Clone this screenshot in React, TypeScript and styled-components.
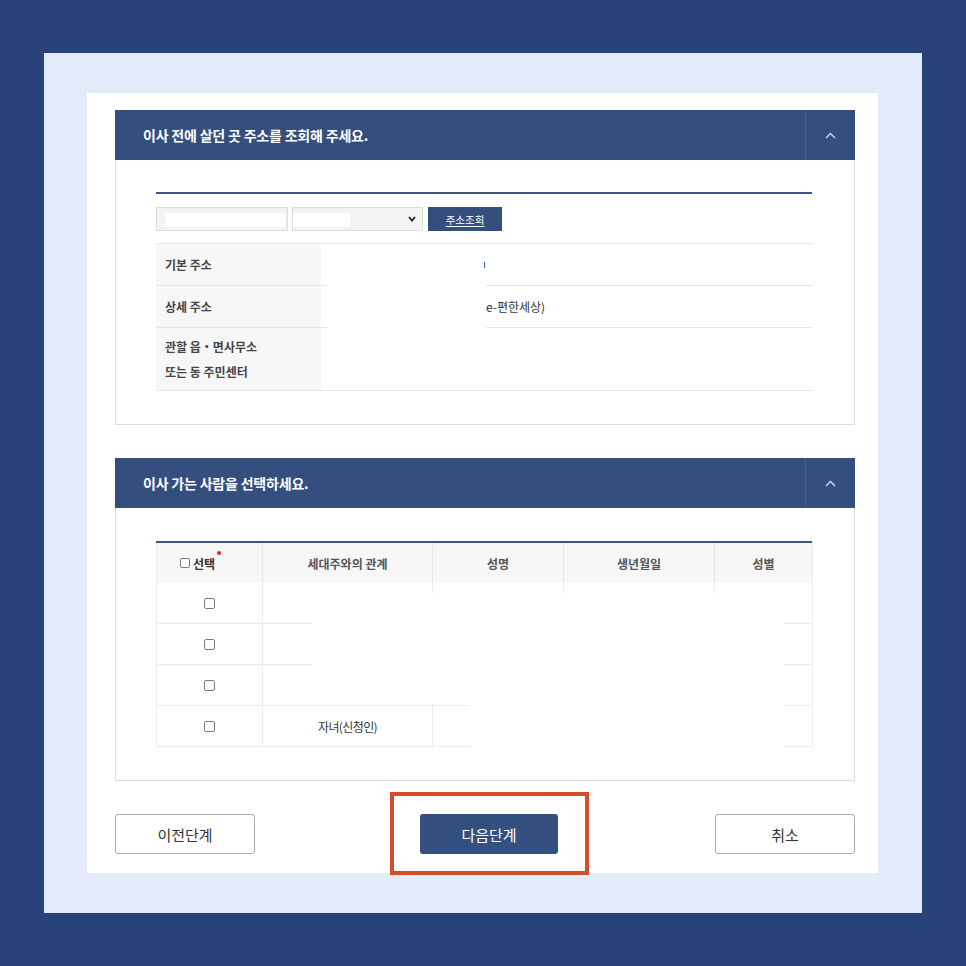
import React from 'react';
import styled, { createGlobalStyle } from 'styled-components';

const GlobalStyle = createGlobalStyle`
  html, body {
    margin: 0;
    padding: 0;
    background: #27437a;
  }
  body {
    font-family: 'Noto Sans CJK KR', 'Noto Sans', sans-serif;
  }
  * {
    box-sizing: border-box;
  }
`;

const Page = styled.div`
  width: 966px;
  height: 966px;
  padding: 53px 44px;
  background: #27437a;
`;

const Frame = styled.div`
  height: 100%;
  background: #e3eaf9;
  padding: 40px 44px 40px 43px;
`;

const Card = styled.div`
  height: 100%;
  background: #fff;
  padding: 17px 23px 19px 28px;
  display: flex;
  flex-direction: column;
`;

const Panel = styled.section`
  & + & {
    margin-top: 33px;
  }
`;

const PanelHeader = styled.div`
  height: 50px;
  background: #344f7e;
  display: flex;
  align-items: center;
  color: #fff;
`;

const PanelTitle = styled.h2`
  flex: 1;
  margin: 0;
  padding-left: 28px;
  font-size: 14px;
  font-weight: 700;
  letter-spacing: -0.2px;
`;

const ToggleButton = styled.button`
  width: 50px;
  height: 100%;
  padding: 0;
  border: 0;
  border-left: 1px solid rgba(255, 255, 255, 0.1);
  background: transparent;
  display: flex;
  align-items: center;
  justify-content: center;
`;

const PanelBody = styled.div<{ $top: number }>`
  border: 1px solid #dcdcdc;
  border-top: 0;
  padding: ${({ $top }) => $top}px 42px 33px 40px;
`;

const FormTop = styled.div`
  border-top: 2px solid #3d5585;
`;

const SearchRow = styled.div`
  display: flex;
  align-items: stretch;
  height: 24px;
  margin-top: 13px;
`;

const TextField = styled.div`
  width: 132px;
  border: 1px solid #dcdcdc;
  background: #f3f3f3;
  padding: 5px 0 0 8px;
`;

const SelectBox = styled.div`
  width: 131px;
  margin-left: 4px;
  border: 1px solid #dcdcdc;
  background: #f3f3f3;
  padding: 5px 6px 0 0;
  display: flex;
  justify-content: space-between;
  align-items: flex-start;
`;

const Blank = styled.span<{ $w: number }>`
  display: block;
  width: ${({ $w }) => $w}px;
  height: 14px;
  background: #fff;
`;

const SelectArrow = styled.svg`
  margin-top: 3px;
`;

const SearchButton = styled.button`
  width: 74px;
  margin-left: 5px;
  border: 0;
  padding: 0;
  background: #344f7e;
  color: #fff;
  font-family: inherit;
  font-size: 10.5px;
  text-decoration: underline;
  text-underline-offset: 2px;
`;

const InfoTable = styled.div`
  position: relative;
  margin-top: 12px;
  border-top: 1px solid #e6e6e6;
`;

const InfoRow = styled.div<{ $h: number }>`
  display: grid;
  grid-template-columns: 165px 1fr;
  height: ${({ $h }) => $h}px;
  border-bottom: 1px solid #e6e6e6;
`;

const InfoLabel = styled.div`
  background: #f7f7f7;
  padding: 0 9px;
  display: flex;
  align-items: center;
  font-size: 12px;
  font-weight: 700;
  line-height: 25px;
  color: #444;
`;

const InfoValue = styled.div<{ $indent?: number }>`
  display: flex;
  align-items: center;
  padding-left: ${({ $indent }) => $indent ?? 10}px;
  font-size: 12px;
  color: #333;
`;

const Caret = styled.span`
  position: relative;
  z-index: 1;
  width: 1px;
  height: 6px;
  background: #2f6ad0;
`;

const Mask = styled.div<{ $x: number; $y: number; $w: number; $h: number }>`
  position: absolute;
  left: ${({ $x }) => $x}px;
  top: ${({ $y }) => $y}px;
  width: ${({ $w }) => $w}px;
  height: ${({ $h }) => $h}px;
  background: #fff;
`;

const PeopleTable = styled.div`
  position: relative;
  border-top: 2px solid #3d5585;
`;

const GridRow = styled.div<{ $head?: boolean }>`
  display: grid;
  grid-template-columns: 106px 170px 131px 151px 98px;
  height: ${({ $head }) => ($head ? 40 : 41)}px;
  background: ${({ $head }) => ($head ? '#f7f7f7' : '#fff')};
  border-left: 1px solid #ededed;
  border-bottom: ${({ $head }) => ($head ? '0' : '1px solid #ececec')};
`;

const HeadCell = styled.div<{ $shift?: number }>`
  display: flex;
  align-items: center;
  justify-content: center;
  padding-right: ${({ $shift }) => $shift ?? 0}px;
  border-right: 1px solid #e8e8e8;
  font-size: 12px;
  font-weight: 700;
  color: #555;
`;

const BodyCell = styled.div`
  display: flex;
  align-items: center;
  justify-content: center;
  border-right: 1px solid #ececec;
  font-size: 12px;
  letter-spacing: -0.6px;
  color: #333;
`;

const CheckBox = styled.span<{ $small?: boolean }>`
  display: inline-block;
  width: ${({ $small }) => ($small ? 10 : 11)}px;
  height: ${({ $small }) => ($small ? 10 : 11)}px;
  border: 1px solid #7d7d7d;
  border-radius: 2px;
  background: #fff;
`;

const SelectLabel = styled.span`
  position: relative;
  margin-left: 3px;
  color: #333;
`;

const RequiredDot = styled.i`
  position: absolute;
  top: -4px;
  right: -6px;
  width: 4px;
  height: 4px;
  border-radius: 50%;
  background: #e0202a;
`;

const ButtonRow = styled.div`
  display: flex;
  align-items: center;
  margin-top: 33px;
  height: 40px;
`;

const OutlineButton = styled.button<{ $push?: boolean }>`
  width: 140px;
  height: 40px;
  margin-left: ${({ $push }) => ($push ? 'auto' : '0')};
  border: 1px solid #a8a8a8;
  border-radius: 3px;
  background: #fff;
  color: #333;
  font-family: inherit;
  font-size: 15px;
`;

const NextWrap = styled.div`
  position: relative;
  margin-left: 165px;
`;

const PrimaryButton = styled.button`
  display: block;
  width: 138px;
  height: 40px;
  border: 0;
  border-radius: 3px;
  background: #34507f;
  color: #fff;
  font-family: inherit;
  font-size: 15px;
`;

const Highlight = styled.div`
  position: absolute;
  top: -22px;
  bottom: -21px;
  left: -30px;
  right: -31px;
  border: 4px solid #d64b2b;
  pointer-events: none;
`;

const ChevronUp = () => (
  <svg width="11" height="7" viewBox="0 0 11 7">
    <polyline points="1,6 5.5,1.5 10,6" fill="none" stroke="#d3dbea" strokeWidth="1.4" />
  </svg>
);

const people = [
  { relation: '' },
  { relation: '' },
  { relation: '' },
  { relation: '자녀(신청인)' },
];

export default function App() {
  return (
    <>
      <GlobalStyle />
      <Page>
        <Frame>
          <Card>
            <Panel>
              <PanelHeader>
                <PanelTitle>이사 전에 살던 곳 주소를 조회해 주세요.</PanelTitle>
                <ToggleButton aria-label="접기">
                  <ChevronUp />
                </ToggleButton>
              </PanelHeader>
              <PanelBody $top={32}>
                <FormTop />
                <SearchRow>
                  <TextField>
                    <Blank $w={120} />
                  </TextField>
                  <SelectBox>
                    <Blank $w={57} />
                    <SelectArrow width="8" height="6" viewBox="0 0 8 6">
                      <polyline points="1,1 4,4.5 7,1" fill="none" stroke="#222" strokeWidth="1.8" />
                    </SelectArrow>
                  </SelectBox>
                  <SearchButton>주소조회</SearchButton>
                </SearchRow>
                <InfoTable>
                  <InfoRow $h={42}>
                    <InfoLabel>기본 주소</InfoLabel>
                    <InfoValue $indent={163}>
                      <Caret />
                    </InfoValue>
                  </InfoRow>
                  <InfoRow $h={42}>
                    <InfoLabel>상세 주소</InfoLabel>
                    <InfoValue $indent={165}>e-편한세상)</InfoValue>
                  </InfoRow>
                  <InfoRow $h={63}>
                    <InfoLabel>
                      관할 읍・면사무소
                      <br />
                      또는 동 주민센터
                    </InfoLabel>
                    <InfoValue />
                  </InfoRow>
                  <Mask $x={171} $y={0} $w={159} $h={88} />
                </InfoTable>
              </PanelBody>
            </Panel>

            <Panel>
              <PanelHeader>
                <PanelTitle>이사 가는 사람을 선택하세요.</PanelTitle>
                <ToggleButton aria-label="접기">
                  <ChevronUp />
                </ToggleButton>
              </PanelHeader>
              <PanelBody $top={33}>
                <PeopleTable>
                  <GridRow $head>
                    <HeadCell $shift={24}>
                      <CheckBox $small />
                      <SelectLabel>
                        선택
                        <RequiredDot />
                      </SelectLabel>
                    </HeadCell>
                    <HeadCell>세대주와의 관계</HeadCell>
                    <HeadCell>성명</HeadCell>
                    <HeadCell>생년월일</HeadCell>
                    <HeadCell>성별</HeadCell>
                  </GridRow>
                  {people.map((p, i) => (
                    <GridRow key={i}>
                      <BodyCell>
                        <CheckBox />
                      </BodyCell>
                      <BodyCell>{p.relation}</BodyCell>
                      <BodyCell />
                      <BodyCell />
                      <BodyCell />
                    </GridRow>
                  ))}
                  <Mask $x={156} $y={50} $w={472} $h={111} />
                  <Mask $x={314} $y={161} $w={314} $h={46} />
                </PeopleTable>
              </PanelBody>
            </Panel>

            <ButtonRow>
              <OutlineButton>이전단계</OutlineButton>
              <NextWrap>
                <PrimaryButton>다음단계</PrimaryButton>
                <Highlight />
              </NextWrap>
              <OutlineButton $push>취소</OutlineButton>
            </ButtonRow>
          </Card>
        </Frame>
      </Page>
    </>
  );
}
